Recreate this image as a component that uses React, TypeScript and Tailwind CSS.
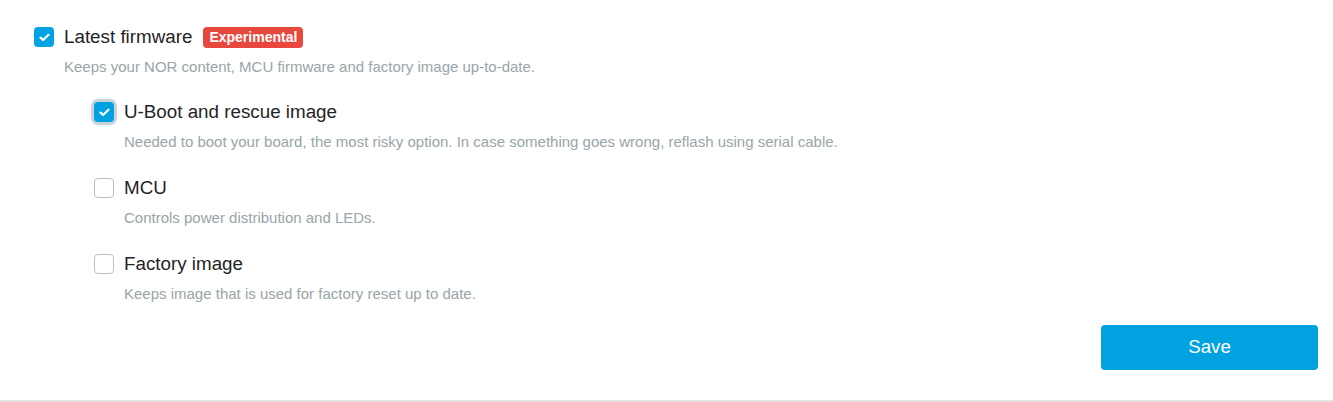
import React from "react";

function Check({ checked, focused }: { checked: boolean; focused?: boolean }) {
  return (
    <div
      className={
        "w-5 h-5 rounded-[4px] flex items-center justify-center shrink-0 " +
        (checked ? "bg-[#00a2e2] " : "bg-white border border-[#b9c0c6] ") +
        (focused ? "ring-[3px] ring-[#ccd2d7]" : "")
      }
    >
      {checked && (
        <svg width="11" height="9" viewBox="0 0 11 9" fill="none">
          <path d="M1.5 4.6 L4.1 7 L9.5 1.7" stroke="white" strokeWidth="2.2" strokeLinecap="round" strokeLinejoin="round" />
        </svg>
      )}
    </div>
  );
}

function Item({
  title,
  desc,
  checked,
  focused,
  badge,
}: {
  title: string;
  desc: string;
  checked: boolean;
  focused?: boolean;
  badge?: string;
}) {
  return (
    <div>
      <div className="flex items-center h-6">
        <Check checked={checked} focused={focused} />
        <span className="ml-[10px] text-[18.8px] leading-6 text-[#1f2427]">{title}</span>
        {badge && (
          <span className="ml-[11px] bg-[#e8473d] text-white font-bold text-[14px] leading-[21px] px-[6px] rounded-[4px]">
            {badge}
          </span>
        )}
      </div>
      <div className="mt-2 ml-[30px] text-[15px] leading-5 text-[#99a5a9]">{desc}</div>
    </div>
  );
}

export default function App() {
  return (
    <div className="w-[1333px] h-[402px] bg-white relative" style={{ fontFamily: '"Liberation Sans", Arial, sans-serif' }}>
      <div className="pl-[34px] pt-[25px] pr-[15px]">
        <Item
          title="Latest firmware"
          badge="Experimental"
          checked
          desc="Keeps your NOR content, MCU firmware and factory image up-to-date."
        />
        <div className="ml-[60px] mt-[23px] flex flex-col gap-6">
          <Item
            title="U-Boot and rescue image"
            checked
            focused
            desc="Needed to boot your board, the most risky option. In case something goes wrong, reflash using serial cable."
          />
          <Item title="MCU" checked={false} desc="Controls power distribution and LEDs." />
          <Item title="Factory image" checked={false} desc="Keeps image that is used for factory reset up to date." />
        </div>
        <div className="flex justify-end mt-[21px]">
          <button className="w-[217px] h-[45px] bg-[#00a3e0] text-white text-[18.7px] rounded-[4px]">Save</button>
        </div>
      </div>
      <div className="absolute left-0 right-0 bottom-0 h-[2px] bg-[#e3e3e3]" />
    </div>
  );
}
